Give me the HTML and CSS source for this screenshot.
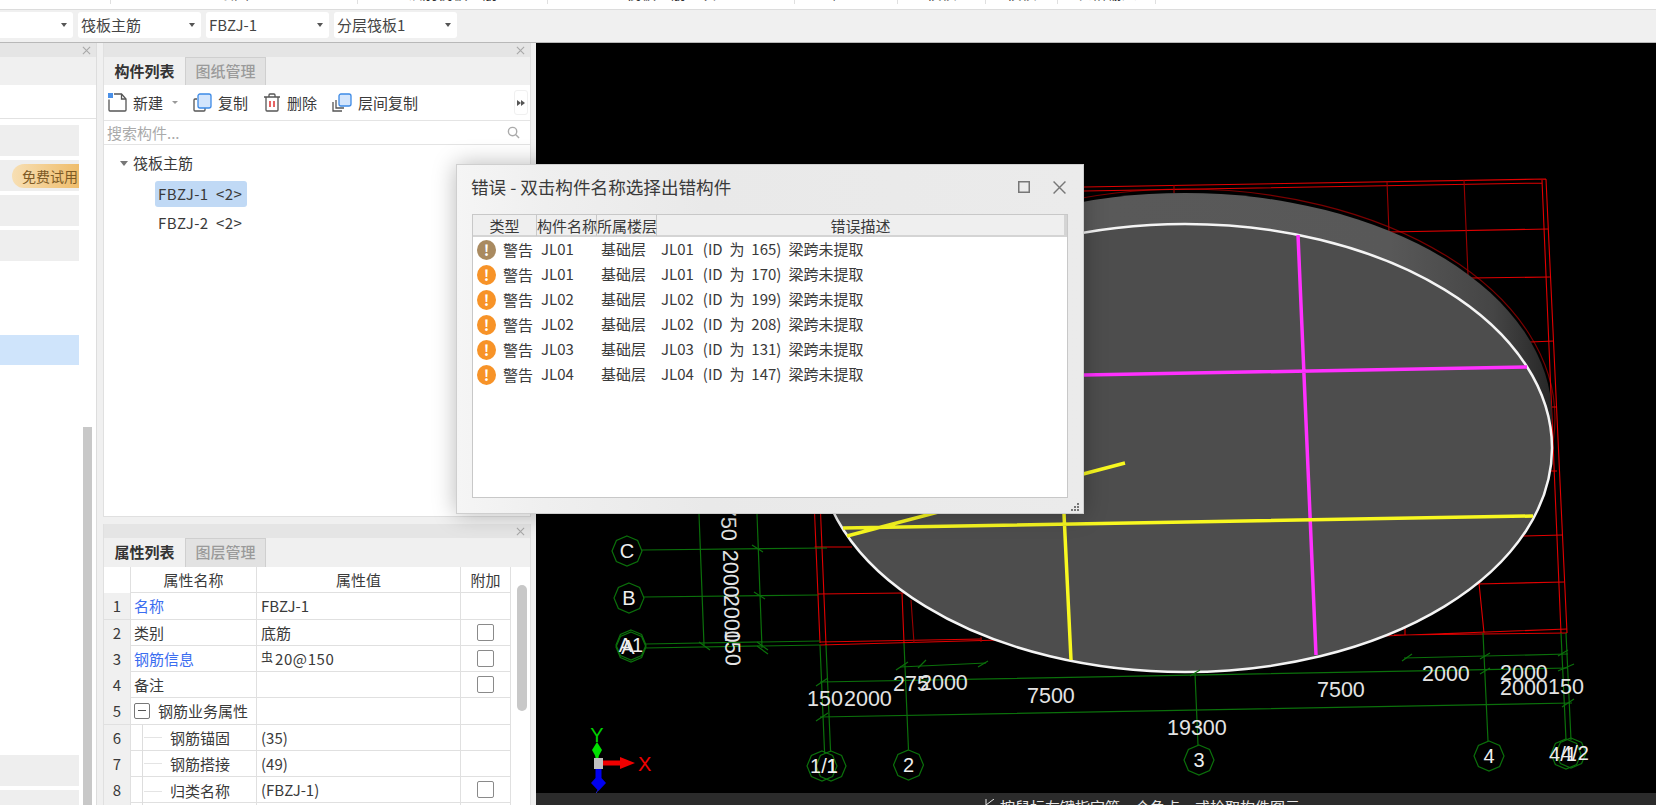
FILE: index.html
```html
<!DOCTYPE html>
<html lang="zh-CN">
<head>
<meta charset="utf-8">
<title>错误 - 双击构件名称选择出错构件</title>
<link rel="stylesheet" href="styles.css">
</head>
<body>
<svg class="defs" width="0" height="0" aria-hidden="true">
  <defs>
    <path id="x-mark" d="M1 1 9 9M9 1 1 9"/>
    <polygon id="oct" points="0,-15 10.6,-10.6 15,0 10.6,10.6 0,15 -10.6,10.6 -15,0 -10.6,-10.6"/>
    <linearGradient id="side" x1="0" x2="1" y1="0" y2="0">
      <stop offset="0" stop-color="#5a5a5a"/>
      <stop offset=".78" stop-color="#585858"/>
      <stop offset=".92" stop-color="#454545"/>
      <stop offset="1" stop-color="#262626"/>
    </linearGradient>
  </defs>
</svg>

<div class="ribbon">
  <div class="seg s1"></div>
  <div class="seg s2"><span>绘图</span></div>
  <div class="seg s3"><span>识别筏板主筋</span></div>
  <div class="seg s4"><span>筏板主筋二次</span></div>
  <div class="seg s5"><span>检查</span></div>
  <div class="seg s6"><span>校核</span></div>
  <div class="seg s7"><span>校核</span></div>
  <div class="seg s8"><span>表格输入</span></div>
</div>

<div class="toolbar">
  <div class="combo first"><span></span><i class="caret"></i></div>
  <div class="combo"><span>筏板主筋</span><i class="caret"></i></div>
  <div class="combo"><span>FBZJ-1</span><i class="caret"></i></div>
  <div class="combo"><span>分层筏板1</span><i class="caret"></i></div>
</div>

<div class="workspace">
  <aside class="left">
    <div class="phead"><svg class="close" viewBox="0 0 10 10"><use href="#x-mark"/></svg></div>
    <div class="ltabs"></div>
    <div class="lblank"></div>
    <div class="lbody">
      <div class="llist">
        <div class="litem"></div>
        <div class="litem"><span class="pill">免费试用</span></div>
        <div class="litem"></div>
        <div class="litem"></div>
        <div class="litem active"></div>
        <div class="litem late"></div>
        <div class="litem"></div>
      </div>
      <div class="ltrack"><div class="lthumb"></div></div>
    </div>
  </aside>

  <div class="middle">
    <section class="panel top">
      <div class="phead"><svg class="close" viewBox="0 0 10 10"><use href="#x-mark"/></svg></div>
      <div class="tabs"><div class="tab on">构件列表</div><div class="tab">图纸管理</div></div>
      <div class="tools">
        <div class="tool">
          <svg class="ico" viewBox="0 0 19 19"><path class="st" d="M1 6.500V17a1 1 0 0 0 1 1h15a1 1 0 0 0 1-1V6L13.500 1H6"/><path class="st" d="M13.500 1v5H18"/><rect class="bluef" x="0" y="0" width="5" height="5"/></svg>
          <span>新建</span><i class="caret small"></i>
        </div>
        <div class="tool">
          <svg class="ico" viewBox="0 0 19 19"><path class="st" d="M4 6H2a1 1 0 0 0-1 1v10a1 1 0 0 0 1 1h9a1 1 0 0 0 1-1v-2"/><rect class="bl" x="5" y="1" width="13" height="14" rx="2"/></svg>
          <span>复制</span>
        </div>
        <div class="tool">
          <svg class="ico trash" viewBox="0 0 18 19"><path class="st" d="M1 4h16M6 4V2a1 1 0 0 1 1-1h4a1 1 0 0 1 1 1v2M3 4v13a1 1 0 0 0 1 1h10a1 1 0 0 0 1-1V4"/><path class="rd" d="M7 8v6M11 8v6"/></svg>
          <span>删除</span>
        </div>
        <div class="tool">
          <svg class="ico wide" viewBox="0 0 20 19"><path class="st" d="M1 9v9h9M4 7v8h8"/><rect class="bl" x="7" y="1" width="12" height="12" rx="2"/></svg>
          <span>层间复制</span>
        </div>
        <div class="more"><i></i><i></i></div>
      </div>
      <div class="search">
        <span>搜索构件...</span>
        <svg class="mag" viewBox="0 0 14 14"><circle cx="6" cy="6" r="4.500"/><path d="M9.500 9.500 13 13"/></svg>
      </div>
      <div class="tree">
        <div class="troot"><i class="caret tree-caret"></i><span>筏板主筋</span></div>
        <div class="tnode sel">FBZJ-1  &lt;2&gt;</div>
        <div class="tnode">FBZJ-2  &lt;2&gt;</div>
      </div>
    </section>

    <section class="panel bottom">
      <div class="phead"><svg class="close" viewBox="0 0 10 10"><use href="#x-mark"/></svg></div>
      <div class="tabs"><div class="tab on">属性列表</div><div class="tab">图层管理</div></div>
      <div class="ptable">
        <div class="pgrid">
          <div class="prow head"><div class="pn"></div><div class="c">属性名称</div><div class="c">属性值</div><div class="c">附加</div></div>
          <div class="prow"><div class="pn">1</div><div class="link">名称</div><div class="v">FBZJ-1</div><div></div></div>
          <div class="prow"><div class="pn">2</div><div>类别</div><div class="v">底筋</div><div class="c"><i class="chk"></i></div></div>
          <div class="prow"><div class="pn">3</div><div class="link">钢筋信息</div><div class="v"><span class="rebar">虫</span><span class="spec">20@150</span></div><div class="c"><i class="chk"></i></div></div>
          <div class="prow"><div class="pn">4</div><div>备注</div><div class="v"></div><div class="c"><i class="chk"></i></div></div>
          <div class="prow"><div class="pn">5</div><div class="grp"><i class="minus"></i>钢筋业务属性</div><div class="v"></div><div></div></div>
          <div class="prow"><div class="pn">6</div><div class="sub"><i class="branch"></i>钢筋锚固</div><div class="v">(35)</div><div></div></div>
          <div class="prow"><div class="pn">7</div><div class="sub"><i class="branch"></i>钢筋搭接</div><div class="v">(49)</div><div></div></div>
          <div class="prow"><div class="pn">8</div><div class="sub"><i class="branch"></i>归类名称</div><div class="v">(FBZJ-1)</div><div class="c"><i class="chk"></i></div></div>
          <div class="prow"><div class="pn"></div><div></div><div></div><div></div></div>
        </div>
        <div class="ptrack"><div class="pthumb"></div></div>
      </div>
    </section>
  </div>

  <main class="view">
    <svg class="scene" viewBox="536 43 1120 750" width="1120" height="750">
      <ellipse class="arc" cx="1185" cy="418" rx="370" ry="229"/>
      <g class="rl">
        <path d="M1084 187 1546 179M1084 191 1542 183M1546 179 1567 633M1542 180 1561 633"/>
        <path d="M1389 232 1548 229M1471 278 1550 277M1530 342 1554 341M1551 407 1556 407M1551 471 1557 471M1522 536 1563 535M1477 584 1564 582"/>
        <path d="M1382 636 1567 629M1394 635 1567 633M1479 583 1484 633M1405 628 1405 635"/>
        <path d="M814.600 514 820 643M820.600 514 826 645M820 645 1000 640M820 642 982 639M818 594 904 593M814.600 547 852 547M902 593 904 643"/>
      </g>
      <g class="rd2">
        <path d="M1174 185 1174 193M1387 182 1389 232M1464 180 1468 275M911 600 914 643M981 637 981 642"/>
      </g>
      <ellipse class="rim" cx="1185" cy="417" rx="367" ry="224"/>
      <ellipse class="deck" cx="1185" cy="448" rx="367" ry="224"/>
      <path class="mag-line" d="M1298 235 1316 655M1084 375 1527 367"/>
      <path class="yel-line" d="M843 528 1533 516M1064 514 1071 660M847 536 1125 463"/>
      <g class="gr">
        <path d="M642 550 827 548M643 597 818 595M645 644 820 641M645 648 820 645"/>
        <path d="M699 514 704 645M757 514 762 648"/>
        <path d="M820 645 824.600 753M826 645 830.600 752M904 643 908.500 750M1195 673 1198 745M1483 633 1488 741M1561 633 1566 740M1566 633 1571 740"/>
        <path d="M820 682 1568 668M820 717 1572 703M900 667 986 663M1404 658 1568 654"/>
        <path d="M752 545 763 552M754 592 765 599M699 642 710 650M757 642 768 650M757 646 768 654"/>
        <path d="M816 686 828 678M816 721 828 713M896 670 908 662M918 668 926 660M978 667 988 661M1402 661 1412 654M1480 659 1490 653M1480 674 1490 668M1558 656 1568 650M1558 671 1574 664M1562 707 1574 699M1190 676 1200 670"/>
        <use href="#oct" x="627" y="551"/><use href="#oct" x="629" y="598"/><use href="#oct" x="631" y="647"/><use href="#oct" x="631" y="645"/>
        <use href="#oct" x="822" y="766"/><use href="#oct" x="831" y="766"/><use href="#oct" x="908.500" y="765"/><use href="#oct" x="1199" y="760"/><use href="#oct" x="1489" y="756"/><use href="#oct" x="1566" y="754"/><use href="#oct" x="1571" y="753"/>
      </g>
      <g class="lbl">
        <text x="627" y="558">C</text><text x="629" y="605">B</text>
        <text x="628" y="654">A</text><text x="631" y="652">A1</text>
        <text x="824" y="773">1/1</text><text x="832" y="773">1</text>
        <text x="908.500" y="772">2</text><text x="1199" y="767">3</text><text x="1489" y="763">4</text>
        <text x="1563" y="761">4/1</text><text x="1575" y="760">4/2</text>
      </g>
      <g class="dim">
        <text x="807" y="706">150</text><text x="844" y="706">2000</text>
        <text x="893" y="691">275</text><text x="920" y="690">2000</text>
        <text x="1027" y="703">7500</text><text x="1317" y="697">7500</text>
        <text x="1422" y="681">2000</text><text x="1500" y="680">2000</text>
        <text x="1500" y="695">2000</text><text x="1548" y="694">150</text>
        <text x="1167" y="735">19300</text>
      </g>
      <g class="dimv">
        <text transform="translate(721 505) rotate(89)">750</text>
        <text transform="translate(723 550) rotate(89)">2000</text>
        <text transform="translate(724 595) rotate(89)">2000</text>
        <text transform="translate(725 630) rotate(89)">150</text>
      </g>
      <g class="axis">
        <path class="ax-g" d="M597 742 602 750 597 759 592 750Z"/><rect class="ax-g" x="595.500" y="755" width="3" height="5"/>
        <path class="ax-b" d="M595.500 769H601.500V778L606 783 598.500 791 591 783 595.500 778Z"/>
        <path class="ax-bl" d="M598 790 592 800"/>
        <path class="ax-r" d="M602 760.500H620V757L635 763 620 769V765.500H602Z"/>
        <rect class="ax-s" x="594" y="758" width="9" height="11"/>
        <text class="ax-yt" x="597" y="742">Y</text>
        <text class="ax-xt" x="638" y="771">X</text>
      </g>
    </svg>
    <div class="status"><svg class="cursor" viewBox="0 0 10 12"><path d="M1 0V12M1 6 9 0"/></svg><span>按鼠标左键指定第一个角点，或拾取构件图元</span></div>
  </main>
</div>

<div class="dialog">
  <div class="dtitle">
    <span>错误 - 双击构件名称选择出错构件</span>
    <svg class="dmax" viewBox="0 0 12 12"><rect x=".75" y=".75" width="10.500" height="10.500"/></svg>
    <svg class="dclose" viewBox="0 0 12 12"><path d="M.5.5 11.500 11.500M11.500.5.5 11.500"/></svg>
  </div>
  <div class="errs">
    <div class="erow ehead"><div>类型</div><div>构件名称</div><div>所属楼层</div><div>错误描述</div></div>
    <div class="erow"><div class="etype"><i class="warn old">!</i>警告</div><div>JL01</div><div>基础层</div><div>JL01<span class="eid">(ID 为 165)</span>梁跨未提取</div></div>
    <div class="erow"><div class="etype"><i class="warn">!</i>警告</div><div>JL01</div><div>基础层</div><div>JL01<span class="eid">(ID 为 170)</span>梁跨未提取</div></div>
    <div class="erow"><div class="etype"><i class="warn">!</i>警告</div><div>JL02</div><div>基础层</div><div>JL02<span class="eid">(ID 为 199)</span>梁跨未提取</div></div>
    <div class="erow"><div class="etype"><i class="warn">!</i>警告</div><div>JL02</div><div>基础层</div><div>JL02<span class="eid">(ID 为 208)</span>梁跨未提取</div></div>
    <div class="erow"><div class="etype"><i class="warn">!</i>警告</div><div>JL03</div><div>基础层</div><div>JL03<span class="eid">(ID 为 131)</span>梁跨未提取</div></div>
    <div class="erow"><div class="etype"><i class="warn">!</i>警告</div><div>JL04</div><div>基础层</div><div>JL04<span class="eid">(ID 为 147)</span>梁跨未提取</div></div>
  </div>
  <svg class="grip" viewBox="0 0 9 9"><path d="M7 1h2v2H7zM4 4h2v2H4zM7 4h2v2H7zM1 7h2v2H1zM4 7h2v2H4zM7 7h2v2H7z"/></svg>
</div>
</body>
</html>
```
FILE: styles.css
```css
* { box-sizing: border-box; }
html, body { margin: 0; padding: 0; }
body {
  position: relative;
  width: 1656px;
  height: 805px;
  overflow: hidden;
  background: #f0f0f0;
  color: #3a3a3a;
  font: 15px/20px "Noto Sans CJK SC", "Noto Sans", sans-serif;
}
i { display: block; font-style: normal; }
.defs { position: absolute; }

/* ribbon remnant */
.ribbon { display: flex; height: 10px; background: #fff; border-bottom: 1px solid #dcdcdc; overflow: hidden; }
.seg { flex: none; border-right: 1px solid #e0e0e0; height: 4px; text-align: center; }
.seg span { display: block; margin-top: -17px; line-height: 20px; color: #333; }
.s1 { width: 111px; } .s2 { width: 247px; } .s3 { width: 190px; } .s4 { width: 247px; }
.s5 { width: 103px; } .s6 { width: 88px; } .s7 { width: 72px; } .s8 { width: 98px; }

/* combos */
.toolbar { display: flex; align-items: center; gap: 5px; height: 33px; padding-bottom: 3px; border-bottom: 1px solid #b8b8b8; }
.combo { display: flex; align-items: center; justify-content: space-between; width: 123px; height: 26px; padding: 0 6px 0 3px; background: #fff; border-radius: 3px; color: #444; }
.combo.first { width: 73px; border-radius: 0 3px 3px 0; }
.caret { width: 0; height: 0; border: 3.5px solid transparent; border-top: 4px solid #555; border-bottom: 0; }

/* layout */
.workspace { display: flex; height: 762px; }
.left { flex: none; width: 97px; display: flex; flex-direction: column; background: #fff; border-right: 1px solid #ddd; }
.phead { flex: none; display: flex; align-items: center; justify-content: flex-end; height: 14px; padding-right: 5px; background: #e5e5e5; }
.close { width: 9px; height: 9px; fill: none; stroke: #a8a8a8; stroke-width: 1.200; }
.ltabs { flex: none; height: 28px; background: #f0f0f0; }
.lblank { flex: none; height: 34px; border-bottom: 1px solid #e2e2e2; }
.lbody { flex: 1; display: flex; min-height: 0; }
.llist { flex: none; width: 83px; padding-top: 6px; overflow: hidden; }
.litem { width: 79px; height: 31px; margin-bottom: 4px; background: #eee; display: flex; justify-content: flex-end; align-items: center; }
.litem.active { margin-top: 74px; height: 30px; background: #cfe4fb; }
.litem.late { margin-top: 390px; }
.pill { width: 67px; height: 24px; padding-left: 10px; border-radius: 12px 0 0 12px; background: linear-gradient(90deg, #f7dfb4, #efbd6c); color: #7d5a26; font-size: 14px; line-height: 24px; white-space: nowrap; overflow: hidden; }
.ltrack { flex: none; width: 9px; padding-top: 308px; }
.lthumb { height: 400px; background: #c8c8c8; }

.middle { flex: none; width: 428px; margin: 0 5px 0 6px; display: flex; flex-direction: column; gap: 7px; }
.panel { display: flex; flex-direction: column; background: #fff; border: 1px solid #e0e0e0; border-top: 0; overflow: hidden; }
.panel.top { height: 474px; }
.panel.bottom { height: 281px; border-bottom: 0; }
.tabs { flex: none; display: flex; height: 28px; background: #f0f0f0; }
.bottom .tabs { height: 29px; }
.tab { width: 81px; padding-top: 3px; text-align: center; background: #e2e2e2; border: 1px solid #cfcfcf; border-bottom: 0; color: #9a9a9a; font-weight: 500; }
.tab.on { background: #f0f0f0; border: 0; padding-top: 4px; color: #333; font-weight: 700; }

.tools { flex: none; display: flex; align-items: center; gap: 15px; height: 36px; padding: 0 2px 0 4px; border-bottom: 1px solid #e4e4e4; }
.tool { display: flex; align-items: center; gap: 6px; }
.ico { flex: none; width: 19px; height: 19px; }
.ico.trash { width: 18px; }
.ico.wide { width: 20px; }
.st { fill: none; stroke: #555; stroke-width: 1.300; }
.bl { fill: #d3e5fc; stroke: #3d8ae6; stroke-width: 1.300; }
.bluef { fill: #4a90e8; }
.rd { fill: none; stroke: #e03030; stroke-width: 1.500; }
.caret.small { margin-left: 3px; border-width: 3px; border-top-width: 3.5px; border-top-color: #999; border-bottom-width: 0; }
.more { display: flex; align-items: center; justify-content: center; width: 14px; height: 25px; margin-left: auto; background: #fff; border: 1px solid #f0f0f0; border-radius: 3px; }
.more i { width: 0; height: 0; border: 3px solid transparent; border-left: 4px solid #555; border-right: 0; }

.search { flex: none; display: flex; align-items: center; justify-content: space-between; height: 24px; padding: 0 10px 0 3px; border-bottom: 1px solid #e4e4e4; color: #aaa; }
.mag { width: 13px; height: 13px; fill: none; stroke: #aaa; stroke-width: 1.500; }

.tree { flex: 1; padding: 7px 0 0 16px; }
.troot { display: flex; align-items: center; gap: 5px; height: 22px; }
.tree-caret { border-top-color: #777; border-width: 4px; border-top-width: 5px; border-bottom-width: 0; }
.tnode { width: 92px; height: 26px; margin: 0 0 3px 35px; padding: 0 3px; line-height: 26px; border-radius: 3px; white-space: pre; letter-spacing: .4px; }
.troot + .tnode { margin-top: 7px; }
.tnode.sel { background: #c0d9f5; }

/* properties */
.ptable { flex: 1; display: flex; min-height: 0; }
.pgrid { flex: none; width: 407px; }
.prow { display: grid; grid-template-columns: 27px 126px 204px 50px; height: 26.250px; line-height: 26px; border-bottom: 1px solid #e0e0e0; }
.prow > div { border-right: 1px solid #e0e0e0; padding-left: 3px; white-space: nowrap; }
.prow > .c { padding-left: 0; text-align: center; }
.prow > .v { padding-left: 4px; }
.prow > .pn { padding-left: 0; text-align: center; background: #f0f0f0; }
.head .pn { background: #fff; }
.link { color: #3b6df0; }
.rebar { display: inline-block; font-size: 12px; line-height: 12px; vertical-align: 3px; margin-right: 2px; }
.spec { letter-spacing: .6px; }
.chk { display: inline-block; width: 17px; height: 17px; margin-top: 4px; border: 1px solid #8a8a8a; border-radius: 2px; background: #fff; }
.grp { display: flex; align-items: center; gap: 8px; }
.minus { position: relative; width: 16px; height: 16px; border: 1px solid #777; border-radius: 2px; }
.minus::after { content: ""; position: absolute; left: 3px; right: 3px; top: 6px; height: 1px; background: #555; }
.prow > .sub { display: flex; align-items: center; padding-left: 11px; }
.branch { flex: none; width: 28px; height: 100%; background: linear-gradient(#ddd, #ddd) 0 0 / 1px 100% no-repeat, linear-gradient(#e4e4e4, #e4e4e4) 2px 50% / 18px 1px no-repeat; }
.ptrack { flex: 1; padding: 18px 0 0 6px; }
.pthumb { width: 10px; height: 126px; background: #c8c8c8; border-radius: 5px; }

/* canvas */
.view { flex: 1; display: flex; flex-direction: column; background: #000; min-width: 0; }
.scene { display: block; flex: none; }
.status { flex: 1; display: flex; padding: 6px 0 0 449px; gap: 5px; background: #2b2b2b; color: #e8e8e8; overflow: hidden; }
.cursor { flex: none; width: 10px; height: 12px; fill: none; stroke: #e8e8e8; }
.status span { margin-top: -2px; }

.arc { fill: none; stroke: #7a0000; stroke-width: 1.200; }
.rl path { fill: none; stroke: #e00000; stroke-width: 1.100; }
.rd2 path { fill: none; stroke: #9a0000; stroke-width: 1.100; }
.rim { fill: url(#side); }
.deck { fill: #4d4d4d; stroke: #f4f4f4; stroke-width: 2.500; }
.mag-line { fill: none; stroke: #ff30ff; stroke-width: 3.500; }
.yel-line { fill: none; stroke: #f8f820; stroke-width: 3.500; }
.gr path, .gr use { fill: none; stroke: #0b700b; stroke-width: 1.200; }
.lbl text { fill: #eee; font: 20px "Liberation Sans", sans-serif; text-anchor: middle; }
.dim text, .dimv text { fill: #e4e4e4; font: 21.500px "Liberation Sans", sans-serif; }
.ax-g { fill: #00e000; }
.ax-b { fill: #0000f0; }
.ax-bl { fill: none; stroke: #2020c0; }
.ax-r { fill: #f00000; }
.ax-s { fill: #c0c0c0; }
.ax-yt { fill: #00d000; font: 20px "Liberation Sans", sans-serif; text-anchor: middle; }
.ax-xt { fill: #f00000; font: 20px "Liberation Sans", sans-serif; }

/* dialog */
.dialog {
  position: absolute;
  left: 456px; top: 164px;
  width: 628px; height: 350px;
  padding: 0 15px;
  background: linear-gradient(90deg, #f5f5f5, #efefef 14%, #e9e9e9 40%, #ebebeb);
  border: 1px solid #cfcfcf;
  box-shadow: 0 0 22px rgba(0, 0, 0, .28);
}
.dtitle { display: flex; align-items: center; height: 49px; padding-bottom: 5px; color: #3a3a3a; font-size: 17.600px; }
.dtitle span { flex: 1; margin-left: -1px; }
.dmax { width: 12px; height: 12px; margin-right: 23px; fill: none; stroke: #777; stroke-width: 1.500; }
.dclose { width: 13px; height: 13px; margin-right: 2px; fill: none; stroke: #777; stroke-width: 1.300; }
.errs { height: 284px; background: #fff; border: 1px solid #c8c8c8; }
.erow { display: grid; grid-template-columns: 64px 60px 60px 1fr; height: 25px; line-height: 23px; white-space: nowrap; }
.erow > div { padding-left: 4px; }
.ehead { height: 22px; line-height: 21px; background: #efefef; border-bottom: 2px solid #d4d4d4; text-align: center; }
.erow.ehead > div { padding: 0; border-right: 1px solid #c8c8c8; }
.erow.ehead > div:last-child { border-right: 3px solid #d4d4d4; }
.erow > .etype { display: flex; align-items: center; gap: 7px; padding-left: 4px; }
.eid { margin: 0 7px 0 9px; word-spacing: 3.500px; }
.warn { flex: none; width: 19px; height: 20px; border-radius: 50%; background: #f79328; color: #fff; font-weight: 700; font-size: 15px; line-height: 20px; text-align: center; }
.warn.old { background: #a98a60; }
.grip { position: absolute; right: 4px; bottom: 2px; width: 9px; height: 9px; fill: #777; }
```
